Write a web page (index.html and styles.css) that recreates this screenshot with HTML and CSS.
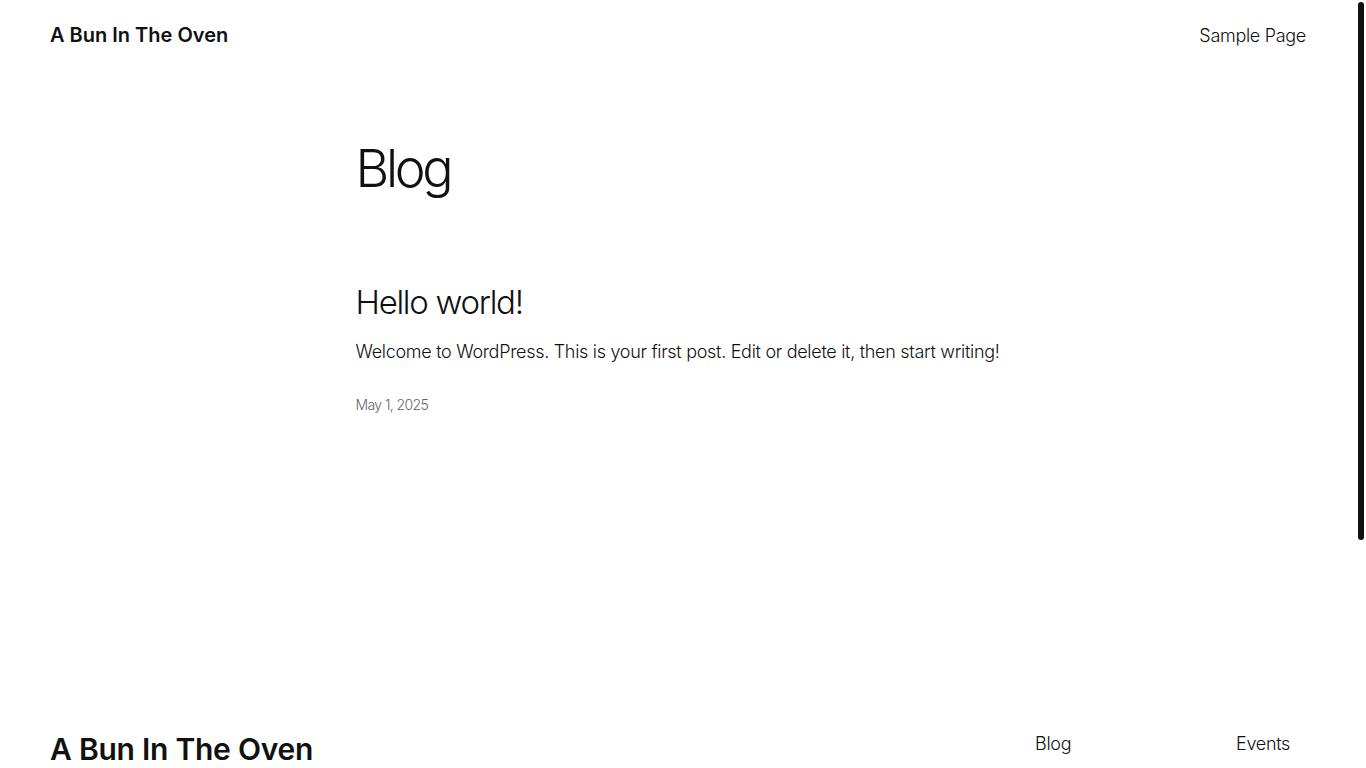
FILE: index.html
```html
<!DOCTYPE html>
<html lang="en">
<head>
<meta charset="utf-8">
<title>Blog – A Bun In The Oven</title>
<link rel="stylesheet" href="styles.css">
</head>
<body>
<div class="page">
  <header class="site-header">
    <a class="site-title" href="#">A Bun In The Oven</a>
    <nav class="header-nav"><a href="#">Sample Page</a></nav>
  </header>
  <main class="site-main">
    <h1 class="page-title">Blog</h1>
    <article class="post">
      <h2 class="post-title"><a href="#">Hello world!</a></h2>
      <p class="post-excerpt">Welcome to WordPress. This is your first post. Edit or delete it, then start writing!</p>
      <time class="post-date">May 1, 2025</time>
    </article>
  </main>
  <footer class="site-footer">
    <div class="footer-inner">
      <a class="footer-title" href="#">A Bun In The Oven</a>
      <div class="footer-navs">
        <nav class="footer-col">
          <a href="#">Blog</a>
          <a href="#">About</a>
          <a href="#">FAQs</a>
          <a href="#">Authors</a>
        </nav>
        <nav class="footer-col footer-col-last">
          <a href="#">Events</a>
          <a href="#">Shop</a>
          <a href="#">Patterns</a>
          <a href="#">Themes</a>
        </nav>
      </div>
    </div>
    <div class="footer-bottom">
      <p>Twenty Twenty-Five</p>
      <p>Designed with WordPress</p>
    </div>
  </footer>
</div>
<div class="scrollbar" aria-hidden="true"><div class="scrollbar-thumb"></div></div>
</body>
</html>
```
FILE: styles.css
```css
body {
  margin: 0;
  background: #fff;
  color: #111;
  font-family: Inter, "Noto Sans", sans-serif;
  font-weight: 300;
  -webkit-font-smoothing: antialiased;
}
a {
  color: inherit;
  text-decoration: none;
}
.page {
  margin-right: 10px;
}
.scrollbar {
  position: fixed;
  top: 0;
  right: 0;
  bottom: 0;
  width: 10px;
  background: #fff;
}
.scrollbar-thumb {
  margin: 2px 2px 0 2px;
  height: 538px;
  background: #111;
  border-radius: 3px;
}
.site-header {
  display: flex;
  justify-content: space-between;
  align-items: center;
  height: 70px;
  padding: 0 50px;
}
.site-title {
  font-size: 20px;
  font-weight: 600;
  letter-spacing: 0;
}
.header-nav a {
  font-size: 18px;
  font-weight: 300;
  letter-spacing: -0.3px;
}
.site-main {
  width: 645px;
  margin: 0 auto;
  padding-top: 68px;
  min-height: 581px;
}
.page-title {
  margin: 0;
  font-size: 52px;
  font-weight: 300;
  line-height: 1.2;
  letter-spacing: -3.3px;
}
.post {
  margin-top: 83px;
}
.post-title {
  margin: 0;
  font-size: 33px;
  font-weight: 300;
  line-height: 1.2;
  letter-spacing: -1.3px;
}
.post-excerpt {
  margin: 15px 0 0;
  font-size: 18px;
  line-height: 1.5;
  letter-spacing: -0.3px;
}
.post-date {
  display: block;
  margin-top: 31px;
  font-size: 14px;
  color: #666;
  letter-spacing: -0.6px;
}
.site-footer {
  padding: 0 50px 60px;
}
.footer-inner {
  display: flex;
  justify-content: space-between;
  align-items: flex-start;
  padding-top: 12px;
}
.footer-title {
  font-size: 30px;
  font-weight: 600;
  letter-spacing: -0.25px;
  line-height: 36px;
}
.footer-navs {
  display: flex;
}
.footer-col {
  display: flex;
  flex-direction: column;
  gap: 14px;
  width: 201px;
  margin-top: -1px;
  font-size: 18px;
  line-height: 27px;
  letter-spacing: -0.3px;
}
.footer-col-last {
  width: 70px;
}
.footer-bottom {
  display: flex;
  justify-content: space-between;
  margin-top: 80px;
  font-size: 14px;
}
```
